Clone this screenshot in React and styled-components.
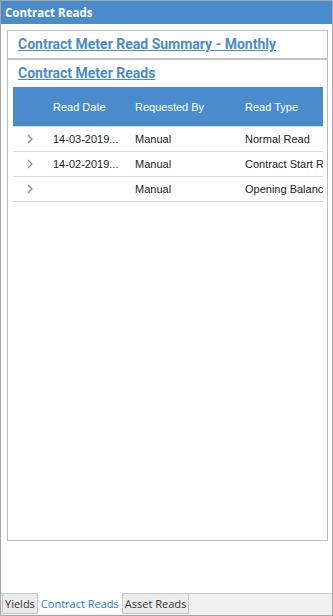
import styled, { createGlobalStyle } from 'styled-components'

const GlobalStyle = createGlobalStyle`
  html, body {
    margin: 0;
    padding: 0;
    background: #ffffff;
  }
  #root {
    width: 333px;
    height: 616px;
  }
`

const Window = styled.div`
  box-sizing: border-box;
  width: 333px;
  height: 616px;
  border: 1px solid #a6a6a6;
  display: flex;
  flex-direction: column;
  background: #ffffff;
`

const TitleBar = styled.div`
  height: 23px;
  background: #4a8ccb;
  color: #ffffff;
  font-family: "Open Sans", sans-serif;
  font-weight: 700;
  font-size: 11.5px;
  line-height: 23px;
  padding-left: 4px;
  flex-shrink: 0;
`

const Body = styled.div`
  flex: 1;
  padding: 6px 4px 0 6px;
  display: flex;
  flex-direction: column;
`

const Panel = styled.div`
  box-sizing: border-box;
  height: 511px;
  border: 1px solid #bdbdbd;
  display: flex;
  flex-direction: column;
`

const Section = styled.div`
  padding: ${p => p.$pad || '0 10px'};
  border-bottom: ${p => (p.$divider ? '2px solid #c4c4c4' : 'none')};
`

const SectionLink = styled.a`
  display: inline-block;
  font-family: Roboto, sans-serif;
  font-weight: 700;
  font-size: 14px;
  color: #4a8ccb;
  text-decoration: underline;
  line-height: ${p => p.$lh || '27px'};
  cursor: pointer;
`

const Table = styled.div`
  margin: 3px 4px 0 5px;
  font-family: "Liberation Sans", Arial, sans-serif;
  font-size: 11px;
`

const Row = styled.div`
  display: grid;
  grid-template-columns: 40px 82px 110px 1fr;
  align-items: center;
  height: ${p => (p.$head ? '39px' : '24px')};
  background: ${p => (p.$head ? '#4a8ccb' : '#ffffff')};
  color: ${p => (p.$head ? '#ffffff' : '#222222')};
  border-bottom: 1px solid ${p => (p.$head ? '#c9d7e6' : '#dcdcdc')};
  white-space: nowrap;
  overflow: hidden;
`

const Cell = styled.div`
  overflow: hidden;
  white-space: nowrap;
`

const Chevron = styled.div`
  display: flex;
  justify-content: flex-start;
  padding-left: 14px;
`

const TabBar = styled.div`
  height: 21px;
  border-top: 1px solid #c8c8c8;
  background: #f0f0f0;
  display: flex;
  align-items: stretch;
  padding-left: 1px;
  flex-shrink: 0;
`

const Tab = styled.div`
  box-sizing: border-box;
  font-family: "Open Sans", sans-serif;
  font-size: 11px;
  color: ${p => (p.$active ? '#1a78d6' : '#333333')};
  background: ${p => (p.$active ? '#ffffff' : '#ececec')};
  border: ${p => (p.$active ? 'none' : '1px solid #c8c8c8')};
  border-top: none;
  margin-top: ${p => (p.$active ? '-1px' : '0')};
  height: ${p => (p.$active ? '21px' : '20px')};
  line-height: ${p => (p.$active ? '22px' : '19px')};
  padding: ${p => (p.$active ? '0 3px' : '0 2px')};
`

const rows = [
  { date: '14-03-2019...', by: 'Manual', type: 'Normal Read' },
  { date: '14-02-2019...', by: 'Manual', type: 'Contract Start Read' },
  { date: '', by: 'Manual', type: 'Opening Balance' },
]

function ChevronIcon() {
  return (
    <svg width="6" height="10" viewBox="0 0 6 10">
      <path d="M1 1 L5 5 L1 9" fill="none" stroke="#8a8a8a" strokeWidth="1.3" />
    </svg>
  )
}

function App() {
  return (
    <>
      <GlobalStyle />
      <Window>
        <TitleBar>Contract Reads</TitleBar>
        <Body>
          <Panel>
            <Section $divider>
              <SectionLink>Contract Meter Read Summary - Monthly</SectionLink>
            </Section>
            <Section $pad="2px 10px 0">
              <SectionLink $lh="22px">Contract Meter Reads</SectionLink>
            </Section>
            <Table>
              <Row $head>
                <Cell />
                <Cell>Read Date</Cell>
                <Cell>Requested By</Cell>
                <Cell>Read Type</Cell>
              </Row>
              {rows.map((r, i) => (
                <Row key={i}>
                  <Chevron><ChevronIcon /></Chevron>
                  <Cell>{r.date}</Cell>
                  <Cell>{r.by}</Cell>
                  <Cell>{r.type}</Cell>
                </Row>
              ))}
            </Table>
          </Panel>
        </Body>
        <TabBar>
          <Tab>Yields</Tab>
          <Tab $active>Contract Reads</Tab>
          <Tab>Asset Reads</Tab>
        </TabBar>
      </Window>
    </>
  )
}

export default App
